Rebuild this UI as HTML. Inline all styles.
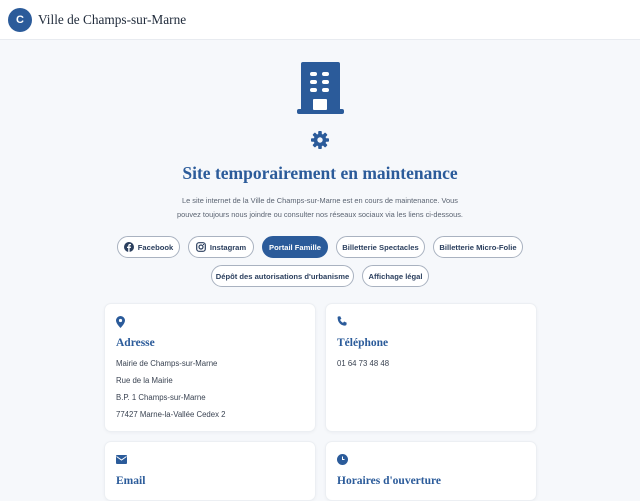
<!DOCTYPE html>
<html><head><meta charset="utf-8"><style>
*{margin:0;padding:0;box-sizing:border-box}
body{width:640px;height:480px;overflow:hidden;background:#f6f8fb;font-family:"Liberation Sans",sans-serif;color:#1f2a3a}
.hdr{height:40px;background:#fff;border-bottom:1px solid #e8ebf0;position:relative}
.logo{position:absolute;left:8px;top:8px;width:24px;height:24px;border-radius:50%;background:#2b5b9a;color:#fff;font:bold 11px "Liberation Sans",sans-serif;text-align:center;line-height:24px}
.ttl{position:absolute;left:38px;top:12px;font:13.3px "Liberation Serif",serif;color:#1f2a3a}
h1{position:absolute;left:0;width:640px;top:163px;text-align:center;font:bold 17.5px "Liberation Serif",serif;color:#2b5b9a}
.desc{position:absolute;left:0;width:640px;top:194px;text-align:center;font-size:7.4px;line-height:14px;color:#5b6472}
.btn{position:absolute;height:22px;border:1px solid #a9b2c0;border-radius:11px;background:#fff;font-size:7.6px;font-weight:bold;color:#2b3f5e;display:flex;align-items:center;justify-content:center;gap:4px;white-space:nowrap}
.btn.p{background:#2b5b9a;border-color:#2b5b9a;color:#fff}
.card{position:absolute;background:#fff;border:1px solid #eceff3;border-radius:7px;box-shadow:0 1px 3px rgba(0,0,0,.04)}
.card h3{position:absolute;left:11px;top:33px;font:bold 11.5px "Liberation Serif",serif;color:#2b5b9a}
.card p{position:absolute;left:11px;font-size:7.8px;color:#3a4352}
.ic{position:absolute;left:11px;top:12px}
</style></head><body>
<div class="hdr"><div class="logo">C</div><div class="ttl">Ville de Champs-sur-Marne</div></div>
<svg style="position:absolute;left:297px;top:62px" width="47" height="52" viewBox="0 0 47 52">
<rect x="4" y="0" width="39" height="52" rx="2" fill="#2b5b9a"/><rect x="0" y="47" width="47" height="5" rx="2" fill="#2b5b9a"/>
<g fill="#fff"><rect x="13" y="10" width="7" height="4" rx="2"/><rect x="25" y="10" width="7" height="4" rx="2"/><rect x="13" y="18" width="7" height="4" rx="2"/><rect x="25" y="18" width="7" height="4" rx="2"/><rect x="13" y="26" width="7" height="4" rx="2"/><rect x="25" y="26" width="7" height="4" rx="2"/><rect x="16" y="37" width="14" height="11" rx="1"/></g></svg>
<svg style="position:absolute;left:311px;top:131px" width="18" height="18" viewBox="0 0 20 20"><g fill="#2b5b9a" transform="translate(10 10)"><circle r="7"/><g id="t"><rect x="-2" y="-10" width="4" height="5" rx="1"/></g><use href="#t" transform="rotate(45)"/><use href="#t" transform="rotate(90)"/><use href="#t" transform="rotate(135)"/><use href="#t" transform="rotate(180)"/><use href="#t" transform="rotate(225)"/><use href="#t" transform="rotate(270)"/><use href="#t" transform="rotate(315)"/></g><circle cx="10" cy="10" r="3" fill="#f6f8fb"/></svg>
<h1>Site temporairement en maintenance</h1>
<div class="desc">Le site internet de la Ville de Champs-sur-Marne est en cours de maintenance. Vous<br>pouvez toujours nous joindre ou consulter nos réseaux sociaux via les liens ci-dessous.</div>
<div class="btn" style="left:117px;top:236px;width:63px"><svg width="10" height="10" viewBox="0 0 10 10"><circle cx="5" cy="5" r="5" fill="#2b3f5e"/><path d="M5.6 10V6h1.2l.2-1.4H5.6v-.8c0-.4.1-.6.6-.6h.8V2a5 5 0 0 0-1-.1C4.9 1.9 4.2 2.6 4.2 3.7v.9H3V6h1.2v4z" fill="#fff"/></svg>Facebook</div>
<div class="btn" style="left:188px;top:236px;width:66px"><svg width="10" height="10" viewBox="0 0 10 10"><rect x="0.7" y="0.7" width="8.6" height="8.6" rx="2.3" fill="none" stroke="#2b3f5e" stroke-width="1.2"/><circle cx="5" cy="5" r="2" fill="none" stroke="#2b3f5e" stroke-width="1.2"/><circle cx="7.5" cy="2.5" r=".6" fill="#2b3f5e"/></svg>Instagram</div>
<div class="btn p" style="left:262px;top:236px;width:66px">Portail Famille</div>
<div class="btn" style="left:336px;top:236px;width:89px">Billetterie Spectacles</div>
<div class="btn" style="left:433px;top:236px;width:90px">Billetterie Micro-Folie</div>
<div class="btn" style="left:211px;top:265px;width:143px">Dépôt des autorisations d'urbanisme</div>
<div class="btn" style="left:362px;top:265px;width:67px">Affichage légal</div>
<div class="card" style="left:104px;top:303px;width:212px;height:129px">
<svg class="ic" width="9" height="12" viewBox="0 0 9 12"><path d="M4.5 0A4.5 4.5 0 0 0 0 4.5C0 7.5 4.5 12 4.5 12S9 7.5 9 4.5A4.5 4.5 0 0 0 4.5 0z" fill="#2b5b9a"/><circle cx="4.5" cy="4.5" r="1.6" fill="#fff"/></svg>
<h3>Adresse</h3>
<p style="top:55px">Mairie de Champs-sur-Marne</p><p style="top:72px">Rue de la Mairie</p><p style="top:89px">B.P. 1 Champs-sur-Marne</p><p style="top:106px">77427 Marne-la-Vallée Cedex 2</p></div>
<div class="card" style="left:325px;top:303px;width:212px;height:129px">
<svg class="ic" width="11" height="11" viewBox="0 0 11 11"><path d="M1 0.5l2.2-.3 1.2 2.6-1.4 1.1a7 7 0 0 0 3 3l1.1-1.4 2.6 1.2-.3 2.2C9.2 10.4 0.6 10 .6 1.1z" fill="#2b5b9a"/></svg>
<h3>Téléphone</h3><p style="top:55px">01 64 73 48 48</p></div>
<div class="card" style="left:104px;top:441px;width:212px;height:60px">
<svg class="ic" width="11" height="9" viewBox="0 0 11 9" style="top:13px"><rect width="11" height="9" rx="1" fill="#2b5b9a"/><path d="M0.5 1.5l5 3.5 5-3.5" fill="none" stroke="#fff" stroke-width="1"/></svg>
<h3 style="top:33px">Email</h3></div>
<div class="card" style="left:325px;top:441px;width:212px;height:60px">
<svg class="ic" width="11" height="11" viewBox="0 0 11 11" style="top:12px"><circle cx="5.5" cy="5.5" r="5.5" fill="#2b5b9a"/><path d="M5.5 2.5v3h2" fill="none" stroke="#fff" stroke-width="1"/></svg>
<h3 style="top:33px">Horaires d'ouverture</h3></div>
</body></html>
